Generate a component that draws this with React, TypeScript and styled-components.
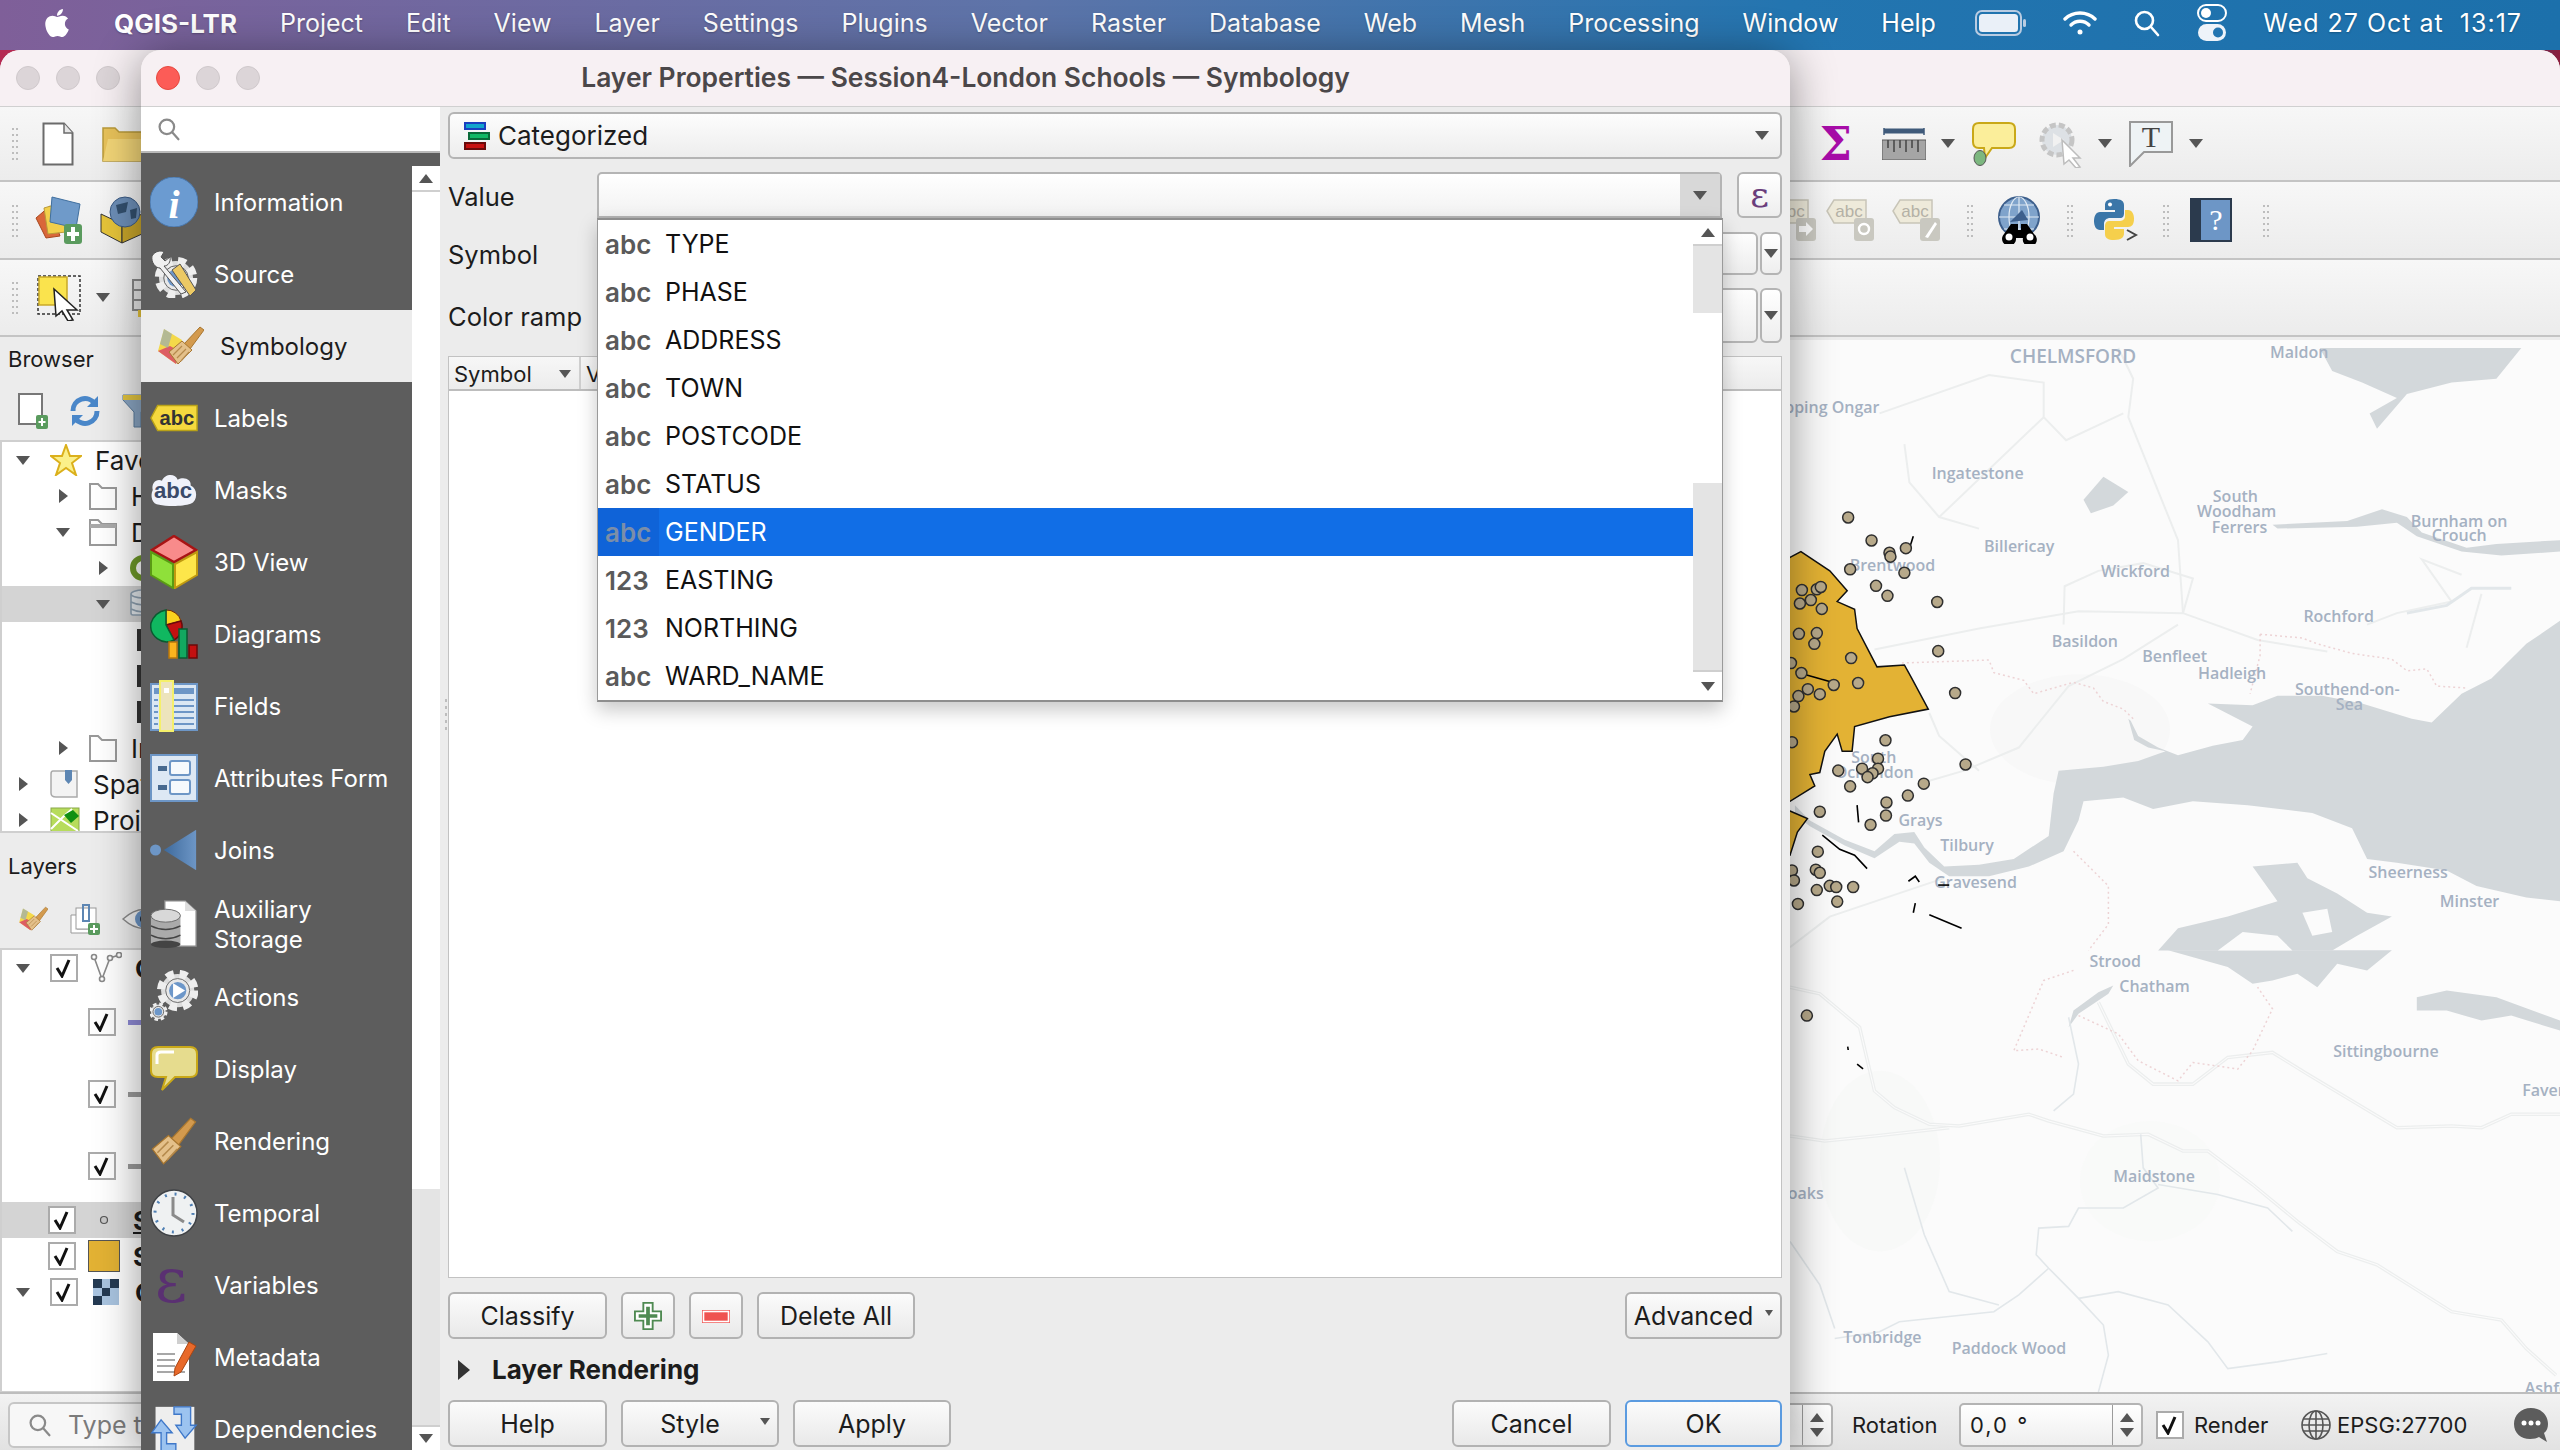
import React from "react";
import styled, { createGlobalStyle } from "styled-components";
import { FaApple } from "react-icons/fa";

const GlobalStyle = createGlobalStyle`
  html, body { margin: 0; padding: 0; background: #1a3c68; }
  * { box-sizing: border-box; }
  body { font-family: Inter, "Liberation Sans", Arial, sans-serif; font-size: 25px; color: #1c1c1c; }
`;

const Screen = styled.div`
  position: relative;
  width: 2560px;
  height: 1450px;
  overflow: hidden;
  background: linear-gradient(90deg, #b52a52 0%, #a82a58 20%, #1c4a7c 21%, #1c4a7c 97%, #8c1c3c 100%);
`;

/* ---------- menu bar ---------- */
const MenuBar = styled.div`
  height: 50px;
  display: flex;
  align-items: center;
  padding: 0 38px 4px 41px;
  color: #fff;
  font-size: 25px;
  white-space: nowrap;
  background: linear-gradient(90deg, #7f5f99 0%, #5d74a9 40%, #2375b0 70%, #1c70ab 100%);
  text-shadow: 0 1px 2px rgba(0, 0, 0, 0.25);
`;
const AppName = styled.span`
  font-weight: 700;
  font-size: 26px;
  margin-left: 41px;
  margin-right: 43px;
`;
const MenuItems = styled.div`
  display: flex;
  gap: 43px;
`;
const StatusIcons = styled.div`
  margin-left: auto;
  display: flex;
  align-items: center;
  gap: 36px;
`;
const Clock = styled.span`
  white-space: pre;
  font-size: 25px;
  letter-spacing: 1px;
`;

/* ---------- main QGIS window ---------- */
const MainWindow = styled.div`
  height: 1400px;
  display: flex;
  flex-direction: column;
  background: #ececec;
  border-radius: 20px 20px 0 0;
  overflow: hidden;
`;
const TitleBar = styled.div<{ $pad: number }>`
  height: 57px;
  flex: none;
  display: flex;
  align-items: center;
  position: relative;
  padding-left: ${(p) => p.$pad}px;
  gap: 16px;
  background: #f7f0f3;
  border-bottom: 1px solid #d0d0d0;
`;
const TrafficLight = styled.span<{ $red?: boolean }>`
  width: 24px;
  height: 24px;
  border-radius: 50%;
  background: ${(p) => (p.$red ? "#fc5c57" : "#dcd5d8")};
  border: 1px solid ${(p) => (p.$red ? "#e5483f" : "#cfc8cb")};
`;
const WindowTitle = styled.div`
  position: absolute;
  left: 0;
  right: 0;
  padding-bottom: 2px;
  text-align: center;
  font-size: 26.4px;
  font-weight: 600;
  color: #4b4749;
`;
const Toolbar = styled.div<{ $h: number }>`
  height: ${(p) => p.$h}px;
  flex: none;
  display: flex;
  align-items: center;
  padding-left: 11px;
  background: linear-gradient(180deg, #f7f7f7, #ececec);
  border-bottom: 2px solid #c4c4c4;
`;
const Grip = styled.span`
  width: 8px;
  height: 35px;
  flex: none;
  background-image: radial-gradient(circle, #bdbdbd 1.2px, transparent 1.4px);
  background-size: 4px 6px;
`;
const ToolSlot = styled.span<{ $gap?: number }>`
  display: flex;
  align-items: center;
  flex: none;
  margin-left: ${(p) => p.$gap ?? 0}px;
`;
const ToolGroupRight = styled.div<{ $end: number }>`
  margin-left: auto;
  display: flex;
  align-items: center;
  padding-right: ${(p) => p.$end}px;
`;
const Caret = styled.span<{ $dir?: "down" | "up" | "right"; $s?: number; $c?: string }>`
  display: inline-block;
  flex: none;
  width: 0;
  height: 0;
  ${(p) => {
    const s = p.$s ?? 7;
    const c = p.$c ?? "#555";
    if (p.$dir === "up")
      return `border-left:${s}px solid transparent;border-right:${s}px solid transparent;border-bottom:${s + 2}px solid ${c};`;
    if (p.$dir === "right")
      return `border-top:${s}px solid transparent;border-bottom:${s}px solid transparent;border-left:${s + 2}px solid ${c};`;
    return `border-left:${s}px solid transparent;border-right:${s}px solid transparent;border-top:${s + 2}px solid ${c};`;
  }}
`;
const Workspace = styled.div`
  flex: 1;
  min-height: 0;
  display: flex;
`;
const LeftPanel = styled.div`
  width: 440px;
  flex: none;
  display: flex;
  flex-direction: column;
  background: #ececec;
`;
const PanelTitle = styled.div<{ $h: number; $top?: number }>`
  height: ${(p) => p.$h}px;
  padding: ${(p) => p.$top ?? 0}px 0 4px 8px;
  display: flex;
  align-items: center;
  font-size: 22px;
  flex: none;
`;
const PanelIcons = styled.div<{ $h: number }>`
  height: ${(p) => p.$h}px;
  flex: none;
  display: flex;
  align-items: center;
  padding: 0 0 4px 18px;
  gap: 22px;
`;
const Tree = styled.div<{ $h: number }>`
  height: ${(p) => p.$h}px;
  flex: none;
  overflow: hidden;
  background: #fff;
  border: 2px solid #cfcfcf;
  border-width: 2px 0 2px 2px;
`;
const TreeRow = styled.div<{ $h?: number; $indent?: number; $selected?: boolean }>`
  height: ${(p) => p.$h ?? 36}px;
  display: flex;
  align-items: center;
  padding-left: ${(p) => p.$indent ?? 0}px;
  font-size: 26px;
  white-space: nowrap;
  background: ${(p) => (p.$selected ? "#d4d4d4" : "transparent")};
`;
const TreeArrow = styled.span`
  width: 34px;
  flex: none;
  display: flex;
  justify-content: center;
`;
const TreeLabel = styled.span<{ $bold?: boolean; $under?: boolean }>`
  margin-left: 13px;
  font-weight: ${(p) => (p.$bold ? 700 : 400)};
  text-decoration: ${(p) => (p.$under ? "underline" : "none")};
`;
const TreeStub = styled.span`
  width: 5px;
  height: 22px;
  background: #333;
`;
const LegendDash = styled.span<{ $c: string }>`
  width: 30px;
  height: 5px;
  margin-left: 12px;
  flex: none;
  background: ${(p) => p.$c};
`;
const CheckBox = styled.span<{ $s?: number }>`
  width: ${(p) => p.$s ?? 28}px;
  height: ${(p) => p.$s ?? 28}px;
  flex: none;
  display: flex;
  align-items: center;
  justify-content: center;
  background: #fff;
  border: 2px solid #ababab;
`;
const LayerSymbol = styled.span`
  width: 32px;
  height: 32px;
  margin-left: 12px;
  flex: none;
  display: flex;
  align-items: center;
  justify-content: center;
`;
const MapPane = styled.div`
  flex: 1;
  min-width: 0;
  margin-top: 3px;
  background: #fbfbfb;
`;
const MapSvg = styled.svg`
  display: block;
  width: 100%;
  height: 100%;
`;
const MapLabel = styled.text<{ $big?: boolean }>`
  font-family: "Open Sans", sans-serif;
  font-size: ${(p) => (p.$big ? 19 : 16)}px;
  font-weight: 600;
  fill: #a5b1c2;
`;
const StatusBar = styled.div`
  height: 58px;
  flex: none;
  display: flex;
  align-items: center;
  padding: 6px 11px 0 8px;
  background: linear-gradient(180deg, #f2f2f2, #e2e2e2);
  border-top: 2px solid #bdbdbd;
`;
const LocatorBox = styled.div`
  width: 360px;
  height: 46px;
  flex: none;
  display: flex;
  align-items: center;
  gap: 16px;
  padding-left: 18px;
  color: #7b7b7b;
  background: #f7f7f7;
  border: 2px solid #c6c6c6;
  border-radius: 6px;
`;
const StatusRight = styled.div`
  margin-left: auto;
  display: flex;
  align-items: center;
  font-size: 22px;
`;
const StatusCell = styled.span<{ $w?: number; $gap?: number }>`
  display: flex;
  align-items: center;
  flex: none;
  width: ${(p) => (p.$w ? `${p.$w}px` : "auto")};
  margin-left: ${(p) => p.$gap ?? 0}px;
`;
const SpinBox = styled.div<{ $w: number }>`
  width: ${(p) => p.$w}px;
  height: 44px;
  display: flex;
  align-items: center;
  flex: none;
  background: linear-gradient(180deg, #fff, #eee);
  border: 2px solid #b4b4b4;
  border-radius: 5px;
`;
const SpinValue = styled.span`
  flex: 1;
  padding-left: 9px;
  white-space: nowrap;
  letter-spacing: 2px;
`;
const SpinArrows = styled.span`
  width: 29px;
  height: 100%;
  margin-left: auto;
  flex: none;
  display: flex;
  flex-direction: column;
  align-items: center;
  justify-content: center;
  gap: 6px;
  border-left: 1px solid #9c9c9c;
`;

/* ---------- layer properties dialog ---------- */
const Dialog = styled.div`
  position: absolute;
  left: 141px;
  top: 50px;
  width: 1649px;
  height: 1400px;
  display: flex;
  flex-direction: column;
  overflow: hidden;
  background: #ececec;
  border-radius: 20px 20px 0 0;
  box-shadow: 0 6px 46px rgba(0, 0, 0, 0.42);
`;
const DialogBody = styled.div`
  flex: 1;
  min-height: 0;
  display: flex;
`;
const NavColumn = styled.div`
  width: 299px;
  flex: none;
  display: flex;
  flex-direction: column;
`;
const NavSearch = styled.div`
  height: 46px;
  flex: none;
  display: flex;
  align-items: center;
  padding-left: 16px;
  background: #fff;
  border-bottom: 2px solid #b9b9b9;
`;
const NavBody = styled.div`
  flex: 1;
  min-height: 0;
  display: flex;
  padding-top: 13px;
  background: #5d5d5d;
`;
const NavList = styled.div`
  width: 271px;
  flex: none;
  overflow: hidden;
`;
const NavRow = styled.div<{ $selected?: boolean; $h?: number }>`
  height: ${(p) => p.$h ?? 72}px;
  display: flex;
  align-items: center;
  gap: 16px;
  padding-left: ${(p) => (p.$selected ? 15 : 9)}px;
  font-size: 24px;
  line-height: 30px;
  color: ${(p) => (p.$selected ? "#1d1d1d" : "#fff")};
  background: ${(p) => (p.$selected ? "#ececec" : "transparent")};
`;
const NavIconSlot = styled.span`
  width: 48px;
  flex: none;
  display: flex;
  justify-content: center;
`;
const NavText = styled.span`
  padding-top: 2px;
`;
const NavScroll = styled.div`
  width: 28px;
  flex: none;
  display: flex;
  flex-direction: column;
  background: #e4e4e4;
`;
const ScrollEnd = styled.div<{ $h: number; $top?: boolean }>`
  height: ${(p) => p.$h}px;
  flex: none;
  display: flex;
  align-items: center;
  justify-content: center;
  background: #fff;
  border: 0 solid #cfcfcf;
  border-bottom-width: ${(p) => (p.$top ? 2 : 0)}px;
  border-top-width: ${(p) => (p.$top ? 0 : 2)}px;
`;
const ScrollThumb = styled.div<{ $h: number; $c: string }>`
  height: ${(p) => p.$h}px;
  flex: none;
  background: ${(p) => p.$c};
`;
const SplitHandle = styled.div`
  width: 8px;
  flex: none;
  display: flex;
  align-items: center;
  justify-content: flex-end;
  padding-bottom: 130px;
`;
const HandleDots = styled.span`
  width: 4px;
  height: 34px;
  background-image: radial-gradient(circle, #bdbdbd 1.2px, transparent 1.4px);
  background-size: 4px 7px;
`;
const RightPane = styled.div`
  flex: 1;
  min-width: 0;
  padding: 5px 8px 0 0;
  display: flex;
  flex-direction: column;
  font-size: 25.5px;
`;
const ComboBox = styled.div<{ $h: number; $fill?: boolean }>`
  height: ${(p) => p.$h}px;
  flex: ${(p) => (p.$fill ? 1 : "none")};
  display: flex;
  align-items: center;
  gap: 8px;
  padding-left: 14px;
  font-size: 26px;
  background: linear-gradient(180deg, #fdfdfd, #ededed);
  border: 2px solid #b4b4b4;
  border-radius: 6px;
  min-width: 0;
`;
const ComboArrow = styled.span`
  margin-left: auto;
  margin-right: 11px;
  display: flex;
`;
const FormRow = styled.div<{ $h: number; $gap: number }>`
  position: relative;
  height: ${(p) => p.$h}px;
  margin-top: ${(p) => p.$gap}px;
  flex: none;
  display: flex;
  align-items: center;
`;
const FormLabel = styled.span`
  width: 149px;
  padding-top: 2px;
  flex: none;
  white-space: nowrap;
`;
const ValueInput = styled.div`
  width: 1125px;
  height: 46px;
  flex: none;
  display: flex;
  background: linear-gradient(180deg, #fff, #f2f2f2);
  border: 2px solid #b4b4b4;
  border-radius: 5px 5px 0 0;
`;
const ValueField = styled.span`
  flex: 1;
`;
const ValueArrow = styled.span`
  width: 40px;
  display: flex;
  align-items: center;
  justify-content: center;
  background: #d8d8d8;
`;
const ExprButton = styled.div`
  width: 45px;
  height: 46px;
  margin-left: 15px;
  flex: none;
  display: flex;
  align-items: center;
  justify-content: center;
  font-family: "DejaVu Serif", serif;
  font-size: 36px;
  line-height: 36px;
  color: #6a3d7c;
  background: linear-gradient(180deg, #fff, #eee);
  border: 2px solid #b4b4b4;
  border-radius: 6px;
`;
const SmallDrop = styled.div`
  width: 22px;
  height: 100%;
  margin-left: 2px;
  flex: none;
  display: flex;
  align-items: center;
  justify-content: center;
  background: linear-gradient(180deg, #fff, #eee);
  border: 2px solid #b4b4b4;
  border-radius: 6px;
`;
const DropList = styled.div`
  position: absolute;
  z-index: 5;
  left: 149px;
  top: 46px;
  width: 1126px;
  height: 484px;
  display: flex;
  font-size: 25px;
  background: #fff;
  border: 1px solid #9a9a9a;
  border-top: 2px solid #8e8e8e;
  border-bottom: 2px solid #8e8e8e;
  box-shadow: 0 8px 18px rgba(0, 0, 0, 0.22);
`;
const DropRows = styled.div`
  flex: 1;
  min-width: 0;
`;
const DropRow = styled.div<{ $selected?: boolean }>`
  height: 48px;
  display: flex;
  align-items: center;
  color: ${(p) => (p.$selected ? "#fff" : "#111")};
  background: ${(p) => (p.$selected ? "#116ee6" : "transparent")};
`;
const TypeCell = styled.span<{ $selected?: boolean }>`
  width: 61px;
  height: 100%;
  flex: none;
  display: flex;
  align-items: center;
  padding-left: 7px;
  font-weight: 600;
  font-size: 26px;
  color: ${(p) => (p.$selected ? "#7b8ea8" : "#5a5a5a")};
  background: ${(p) => (p.$selected ? "#0f63d8" : "transparent")};
`;
const FieldName = styled.span`
  padding-left: 6px;
`;
const DropScroll = styled.div`
  width: 29px;
  flex: none;
  display: flex;
  flex-direction: column;
  background: #e4e4e4;
`;
const SymbolTable = styled.div`
  height: 922px;
  margin-top: 13px;
  flex: none;
  display: flex;
  flex-direction: column;
  background: #fff;
  border: 1px solid #c2c2c2;
`;
const TableHeader = styled.div`
  height: 34px;
  flex: none;
  display: flex;
  font-size: 22px;
  background: linear-gradient(180deg, #f7f7f7, #ececec);
  border-bottom: 2px solid #bdbdbd;
`;
const HeaderCell = styled.div<{ $w: number }>`
  width: ${(p) => p.$w}px;
  flex: none;
  display: flex;
  align-items: center;
  justify-content: space-between;
  padding: 2px 8px 0 5px;
  border-right: 2px solid #cfcfcf;
`;
const ButtonRow = styled.div<{ $gap?: number }>`
  height: 47px;
  margin-top: ${(p) => p.$gap ?? 14}px;
  flex: none;
  display: flex;
  gap: 14px;
`;
const PushButton = styled.div<{ $w: number; $primary?: boolean; $menu?: boolean }>`
  position: relative;
  width: ${(p) => p.$w}px;
  height: 47px;
  flex: none;
  display: flex;
  align-items: center;
  justify-content: center;
  padding-top: 1px;
  padding-right: ${(p) => (p.$menu ? 20 : 0)}px;
  font-size: 25px;
  white-space: nowrap;
  background: linear-gradient(180deg, #fbfbfb, #e9e9e9);
  border: 2px solid ${(p) => (p.$primary ? "#5b9be0" : "#b2b2b2")};
  border-radius: 6px;
`;
const ButtonCaret = styled.span`
  position: absolute;
  right: 7px;
  top: 16px;
  display: flex;
`;
const ButtonSpacer = styled.span`
  flex: 1;
`;
const CollapsedSection = styled.div`
  height: 61px;
  padding: 0 0 0 10px;
  flex: none;
  display: flex;
  align-items: center;
  gap: 22px;
  font-weight: 700;
  font-size: 26px;
`;

/* ---------- drawn icons ---------- */
const WifiIcon = () => (
  <svg width="34" height="28" viewBox="0 0 34 28" fill="none" stroke="#fff" strokeWidth="3.4" strokeLinecap="round">
    <path d="M2 10C10 2 24 2 32 10" />
    <path d="M8 16C13 11 21 11 26 16" />
    <circle cx="17" cy="23" r="2.5" fill="#fff" stroke="none" />
  </svg>
);
const BatteryIcon = () => (
  <svg width="52" height="26" viewBox="0 0 52 26">
    <rect x="1" y="1" width="45" height="24" rx="6" fill="none" stroke="#b9cce2" strokeWidth="2" />
    <rect x="4" y="4" width="39" height="18" rx="3.5" fill="#eaf0f8" />
    <rect x="48" y="9" width="3" height="8" rx="1.5" fill="#b9cce2" />
  </svg>
);
const SearchIcon = ({ c = "#fff", s = 28 }: { c?: string; s?: number }) => (
  <svg width={s} height={s} viewBox="0 0 28 28" fill="none" stroke={c} strokeWidth="2.6" strokeLinecap="round">
    <circle cx="11.5" cy="11.5" r="8.5" />
    <path d="M18 18L25 26" />
  </svg>
);
const ControlIcon = () => (
  <svg width="30" height="38" viewBox="0 0 30 38">
    <rect x="1" y="1" width="28" height="16" rx="8" fill="none" stroke="#fff" strokeWidth="2" />
    <circle cx="9" cy="9" r="5" fill="#fff" />
    <rect x="1" y="20" width="28" height="17" rx="8.5" fill="#eef3f9" />
    <circle cx="21" cy="28.5" r="5" fill="#2375b0" />
  </svg>
);
const Check = ({ s = 20 }: { s?: number }) => (
  <svg width={s} height={s} viewBox="0 0 20 20" fill="none" stroke="#111" strokeWidth="3">
    <path d="M3 10L8 18L15 2" />
  </svg>
);
const FolderOutline = ({ open }: { open?: boolean }) => (
  <svg width="30" height="28" viewBox="0 0 30 28" fill="none" stroke="#999" strokeWidth="2">
    <path d="M2 27V2H10L14 6H28V27Z" fill="#fff" />
    {open && <path d="M2 8H28" strokeWidth="4" stroke="#aaa" />}
  </svg>
);
const GreenRing = () => (
  <svg width="30" height="28" viewBox="0 0 30 28" fill="none" stroke="#6f9a2a" strokeWidth="6">
    <circle cx="15" cy="14" r="10" />
  </svg>
);
const DbSmall = () => (
  <svg width="30" height="30" viewBox="0 0 30 30" fill="#e3e8ec" stroke="#8ea0b0" strokeWidth="1.6">
    <rect x="3" y="5" width="24" height="21" rx="2" />
    <ellipse cx="15" cy="5" rx="12" ry="4" />
    <path d="M3 13Q15 19 27 13M3 20Q15 26 27 20" fill="none" />
  </svg>
);
const SpatialIcon = () => (
  <svg width="30" height="30" viewBox="0 0 30 30">
    <path d="M3 2H27V28H6Q1 28 1 24V5Q1 2 3 2Z" fill="#f3f3f3" stroke="#aaa" strokeWidth="1.5" />
    <path d="M15 1H22V11L18.5 15L15 11Z" fill="#5d86b3" />
  </svg>
);
const ProjectIcon = () => (
  <svg width="30" height="30" viewBox="0 0 30 30">
    <rect x="1" y="3" width="28" height="26" fill="#b7dc5c" stroke="#8aa84a" />
    <path d="M1 8L28 26M1 24L13 12L22 4" stroke="#fff" strokeWidth="2" fill="none" />
    <path d="M14 10L23 5L29 11L21 18Z" fill="#0f8f12" />
  </svg>
);
const VectorIcon = () => (
  <svg width="32" height="32" viewBox="0 0 32 32" fill="none" stroke="#8a8a8a" strokeWidth="1.6">
    <path d="M4 5L12 27L20 6L29 3" />
    <circle cx="4" cy="5" r="2.5" fill="#fff" />
    <circle cx="12" cy="27" r="2.5" fill="#fff" />
    <circle cx="20" cy="6" r="2.5" fill="#fff" />
    <circle cx="29" cy="3" r="2.5" fill="#fff" />
  </svg>
);
const SchoolDot = () => (
  <svg width="10" height="10" viewBox="0 0 10 10">
    <circle cx="5" cy="5" r="3.5" fill="#c8c8c8" stroke="#555" strokeWidth="1.2" />
  </svg>
);
const SwatchSquare = () => (
  <svg width="32" height="32" viewBox="0 0 32 32">
    <rect x="0.5" y="0.5" width="31" height="31" fill="#e3b234" stroke="#555" />
  </svg>
);
const CheckerIcon = () => (
  <svg width="26" height="26" viewBox="0 0 3 3" shapeRendering="crispEdges">
    <rect width="3" height="3" fill="#a9c4e0" />
    <path d="M0 0H1V1H0ZM2 0H3V1H2ZM1 1H2V2H1ZM0 2H1V3H0Z" fill="#243a52" />
  </svg>
);
const ClipIcon = () => (
  <svg width="30" height="32" viewBox="0 0 30 32">
    <path d="M1 12H7V26H20V30H1Z" fill="#fff" stroke="#999" />
    <rect x="6" y="5" width="20" height="21" fill="#fff" stroke="#999" />
    <path d="M13 2H19V18H13Z" fill="none" stroke="#5d86b3" strokeWidth="2" />
    <rect x="18" y="20" width="12" height="12" rx="2" fill="#5a9b5e" />
    <path d="M24 22V30M20 26H28" stroke="#fff" strokeWidth="2" />
  </svg>
);
const EyeIcon = () => (
  <svg width="44" height="26" viewBox="0 0 44 26">
    <path d="M1 13Q22 -6 43 13Q22 32 1 13Z" fill="#f2f2f2" stroke="#8a8a8a" strokeWidth="1.5" />
    <circle cx="22" cy="13" r="9" fill="#6d96c6" />
    <circle cx="22" cy="13" r="4" fill="#1e2a3a" />
  </svg>
);
const NewDoc = () => (
  <svg width="32" height="44" viewBox="0 0 32 44">
    <path d="M1.5 1.5H22L30.5 11V42.5H1.5Z" fill="#fff" stroke="#6b6b6b" strokeWidth="2" />
    <path d="M22 1.5V11H30.5" fill="#e6e6e6" stroke="#6b6b6b" strokeWidth="1.5" />
  </svg>
);
const FolderYellow = () => (
  <svg width="42" height="36" viewBox="0 0 42 36">
    <path d="M1 35V2H13L17 6H42V35Z" fill="#e8c25a" stroke="#b99a3a" strokeWidth="1.5" />
    <path d="M1 35L6 13H42V35Z" fill="#f2d577" />
  </svg>
);
const AddLayers = () => (
  <svg width="48" height="48" viewBox="0 0 48 48">
    <path d="M2 22L16 10L26 40L12 42Z" fill="#d9673a" stroke="#a8481f" />
    <path d="M10 12L30 6L32 36L14 38Z" fill="#f2cf4a" stroke="#b99a3a" />
    <path d="M18 1L46 8L42 32L16 26Z" fill="#6f9ac9" stroke="#3f6f9f" />
    <rect x="30" y="28" width="18" height="20" rx="3" fill="#5a9b5e" />
    <path d="M39 31V45M33 38H45" stroke="#fff" strokeWidth="4" />
  </svg>
);
const DbGlobe = () => (
  <svg width="42" height="48" viewBox="0 0 42 48">
    <path d="M1 18L22 28V47L1 36Z" fill="#e6c43a" stroke="#333" />
    <path d="M22 28L42 18V38L22 47Z" fill="#c9a62a" stroke="#333" />
    <circle cx="25" cy="16" r="15" fill="#6d8fb8" stroke="#3b5b85" />
    <path d="M16 9L28 6L26 16L18 18ZM30 14L37 12L36 22L31 23Z" fill="#33506f" />
  </svg>
);
const SelectTool = () => (
  <svg width="46" height="46" viewBox="0 0 46 46">
    <rect x="1" y="1" width="42" height="38" fill="none" stroke="#333" strokeWidth="1.5" strokeDasharray="3 2" />
    <rect x="2" y="2" width="28" height="28" fill="#fae34d" stroke="#c9a928" strokeWidth="1.5" />
    <path d="M17 14L40 35L30 35L36 45L31 46L25 36L19 41Z" fill="#fff" stroke="#222" strokeWidth="1.5" />
  </svg>
);
const AttributeTool = () => (
  <svg width="30" height="38" viewBox="0 0 30 38">
    <rect x="1" y="1" width="28" height="30" fill="#e8e8e8" stroke="#8a8a8a" strokeWidth="2" />
    <path d="M1 11H29M1 21H29M11 1V31" stroke="#8a8a8a" strokeWidth="2" />
    <rect x="6" y="31" width="10" height="7" fill="#e6c43a" />
  </svg>
);
const MeasureIcon = () => (
  <svg width="44" height="32" viewBox="0 0 44 32">
    <path d="M2 3H42" stroke="#3f5a7a" strokeWidth="5" />
    <path d="M2 0V7M42 0V7" stroke="#3f5a7a" strokeWidth="1.5" />
    <rect x="0" y="12" width="44" height="20" fill="#a5a5a5" stroke="#5a5a5a" />
    <path d="M6 12V20M12 12V24M18 12V20M24 12V24M30 12V20M36 12V24" stroke="#444" strokeWidth="1.5" />
  </svg>
);
const Sigma = styled.span`
  font-family: "DejaVu Serif", serif;
  font-weight: 700;
  font-size: 46px;
  line-height: 46px;
  color: #a70ca8;
`;
const TipIcon = () => (
  <svg width="44" height="44" viewBox="0 0 44 44">
    <path d="M7 1H37Q43 1 43 7V20Q43 26 37 26H20L13 36L12 26H7Q1 26 1 20V7Q1 1 7 1Z" fill="#fbee9a" stroke="#c9a818" strokeWidth="2" />
    <ellipse cx="8" cy="36" rx="6" ry="7.5" fill="#7cb77f" stroke="#555" />
  </svg>
);
const ActionCursor = () => (
  <svg width="50" height="48" viewBox="0 0 50 48">
    <circle cx="21" cy="20" r="15" fill="#dde1e5" stroke="#c5c5c5" strokeWidth="5" strokeDasharray="6 3" />
    <path d="M17 13L28 20L17 27Z" fill="#f1f1f1" />
    <path d="M26 20L44 38L37 38L44 47L40 48L33 40L28 44Z" fill="#fff" stroke="#bdbdbd" strokeWidth="1.5" />
  </svg>
);
const TextBubble = () => (
  <svg width="44" height="46" viewBox="0 0 44 46">
    <path d="M1 1H43V31H15L1 45Z" fill="#eef3f5" stroke="#999" strokeWidth="2" />
    <text x="22" y="26" textAnchor="middle" fontFamily="Liberation Serif" fontSize="30" fill="#444">T</text>
  </svg>
);
const LabelTool = ({ glyph }: { glyph: "arrow" | "rotate" | "pen" }) => (
  <svg width="48" height="42" viewBox="0 0 48 42">
    <path d="M8 1H40V24H8L1 12Z" fill="#eeeada" stroke="#c8c5b8" strokeWidth="1.5" />
    <text x="23" y="18" textAnchor="middle" fontFamily="Liberation Sans" fontSize="17" fill="#b4b1a6">abc</text>
    <rect x="28" y="19" width="20" height="23" rx="3" fill="#c9c8c0" />
    {glyph === "rotate" && <circle cx="38" cy="30" r="5" fill="none" stroke="#fff" strokeWidth="2.4" />}
    {glyph === "arrow" && <path d="M31 27H38V23L45 30L38 37V33H31Z" fill="#fff" />}
    {glyph === "pen" && <path d="M33 38L43 23L45 25L36 39Z" fill="#fff" />}
  </svg>
);
const GlobeBinoculars = () => (
  <svg width="42" height="48" viewBox="0 0 42 48">
    <circle cx="21" cy="21" r="20" fill="#7fa3cb" stroke="#3d5f8c" strokeWidth="2" />
    <path d="M1 21H41M21 1V41M6 9H36M6 33H36" stroke="#dfe9f3" strokeWidth="1.2" />
    <ellipse cx="21" cy="21" rx="10" ry="20" fill="none" stroke="#dfe9f3" strokeWidth="1.2" />
    <path d="M12 26L24 14L30 24Z" fill="#3d5f8c" />
    <path d="M13 28H20V34H23V28H29L36 38A7 7 0 1 1 25 42H18A7 7 0 1 1 6 38Z" fill="#000" />
    <circle cx="11" cy="41" r="3.5" fill="#fff" />
    <circle cx="32" cy="41" r="3.5" fill="#fff" />
  </svg>
);
const PythonIcon = () => (
  <svg width="44" height="44" viewBox="0 0 44 44">
    <path d="M20 1C12 1 11 4 11 8V12H21V14H6C2 14 0 18 0 23S2 32 6 32H10V26C10 22 13 20 16 20H26C29 20 30 18 30 15V7C30 3 27 1 20 1Z" fill="#3b76a8" />
    <circle cx="16" cy="6.5" r="2" fill="#fff" />
    <path d="M20 42C28 42 30 39 30 35V31H20V29H34C38 29 40 26 40 21S38 12 34 12H31V18C31 22 28 23 25 23H15C12 23 11 26 11 28V36C11 40 14 42 20 42Z" fill="#f5cf4c" />
    <path d="M33 32L42 37L33 42" fill="none" stroke="#444" strokeWidth="2" />
  </svg>
);
const HelpBook = () => (
  <svg width="42" height="44" viewBox="0 0 42 44">
    <rect x="1" y="1" width="40" height="42" fill="#6d96c6" stroke="#2b3a4d" strokeWidth="2" />
    <rect x="1" y="1" width="10" height="42" fill="#2b3a4d" />
    <text x="26" y="32" textAnchor="middle" fontFamily="Liberation Serif" fontSize="30" fill="#fff">?</text>
  </svg>
);
const SmallNew = () => (
  <svg width="30" height="36" viewBox="0 0 30 36">
    <rect x="1" y="1" width="23" height="30" fill="#fff" stroke="#777" strokeWidth="2" />
    <rect x="18" y="22" width="12" height="14" rx="2" fill="#5a9b5e" />
    <path d="M24 25V33M20.5 29H27.5" stroke="#fff" strokeWidth="2" />
  </svg>
);
const RefreshIcon = () => (
  <svg width="30" height="34" viewBox="0 0 30 34" fill="none" stroke="#4a87c9" strokeWidth="5">
    <path d="M3 17A12 12 0 0 1 25 10" />
    <path d="M27 17A12 12 0 0 1 5 24" />
    <path d="M28 2V13H17Z" fill="#4a87c9" stroke="none" />
    <path d="M2 32V21H13Z" fill="#4a87c9" stroke="none" />
  </svg>
);
const FilterIcon = () => (
  <svg width="30" height="34" viewBox="0 0 30 34">
    <path d="M1 1H29V6L19 18V33H12V18L1 6Z" fill="#8aa5c2" stroke="#5a7a9a" />
    <rect x="1" y="1" width="28" height="5" fill="#e2c440" />
  </svg>
);
const StarIcon = () => (
  <svg width="32" height="32" viewBox="0 0 32 32">
    <path d="M16 1L20 12H31L22 19L26 31L16 24L6 31L10 19L1 12H12Z" fill="#fbf08a" stroke="#dbb01c" strokeWidth="2" />
  </svg>
);
const BrushHead = () => (
  <>
    <path d="M28 18L44 1L48 4L34 23Z" fill="#d39a4e" stroke="#a8762f" />
    <path d="M13 26L26 15L36 24L22 38Z" fill="#e4c08a" stroke="#a8762f" />
    <path d="M17 29L26 20M21 32L30 23M25 35L33 26" stroke="#b58a4d" strokeWidth="1.2" />
  </>
);
const PaintBrush = ({ w, h }: { w: number; h: number }) => (
  <svg width={w} height={h} viewBox="0 0 48 40">
    <path d="M2 25L8 3L26 14L20 38Z" fill="#f4d94a" />
    <path d="M2 25L14 20L25 26L20 38Z" fill="#dd5d63" />
    <path d="M8 3L16 8L12 22L4 18Z" fill="#7f9fd0" opacity="0.55" />
    <BrushHead />
  </svg>
);
const Gear = ({ cx, cy, r, fill }: { cx: number; cy: number; r: number; fill: string }) => (
  <g>
    <circle cx={cx} cy={cy} r={r} fill="#ddd" stroke="#eee" strokeWidth={r * 0.5} strokeDasharray={`${r * 0.45} ${r * 0.35}`} />
    <circle cx={cx} cy={cy} r={r * 0.72} fill="#e8e8e8" stroke="#666" strokeWidth="1" />
    <circle cx={cx} cy={cy} r={r * 0.52} fill={fill} />
  </g>
);

const navIcons: Record<string, React.ReactNode> = {
  Information: (
    <svg width="48" height="50" viewBox="0 0 48 50">
      <ellipse cx="24" cy="25" rx="24" ry="25" fill="#6b9bd1" stroke="#4a78ad" />
      <text x="24" y="41" textAnchor="middle" fontFamily="Liberation Serif" fontStyle="italic" fontWeight="700" fontSize="40" fill="#fff">i</text>
    </svg>
  ),
  Source: (
    <svg width="48" height="48" viewBox="0 0 48 48">
      <Gear cx={26} cy={28} r={17} fill="#6d97c9" />
      <path d="M2 6C5 1 11 0 14 2L11 7L15 11L20 7C21 12 18 16 14 16L36 42L31 44L10 18C5 18 1 12 2 6Z" fill="#f1f1f1" stroke="#555" />
      <path d="M22 20L30 14L46 40L40 46Z" fill="#ecc964" stroke="#555" />
    </svg>
  ),
  Symbology: <PaintBrush w={52} h={40} />,
  Labels: (
    <svg width="50" height="28" viewBox="0 0 50 28">
      <path d="M8 1H49V27H8L1 14Z" fill="#f5d93e" stroke="#b9a218" strokeWidth="1.5" />
      <text x="28" y="21" textAnchor="middle" fontFamily="Liberation Sans" fontWeight="700" fontSize="21" fill="#333">abc</text>
    </svg>
  ),
  Masks: (
    <svg width="52" height="36" viewBox="0 0 52 36">
      <path d="M10 34C2 34 0 24 3 18C1 10 8 5 13 8C16 0 28 0 30 7C37 3 45 7 44 13C52 16 52 30 44 33C36 36 18 36 10 34Z" fill="#f0f2fa" />
      <text x="25" y="27" textAnchor="middle" fontFamily="Liberation Sans" fontWeight="700" fontSize="24" fill="#3a4a6a">abc</text>
    </svg>
  ),
  "3D View": (
    <svg width="48" height="54" viewBox="0 0 48 54">
      <path d="M24 1L46 15L24 27L2 15Z" fill="#f88b8b" stroke="#a81414" strokeWidth="2.5" />
      <path d="M1 17L23 29V53L1 40Z" fill="#8fe03a" stroke="#5a9b14" strokeWidth="2" />
      <path d="M47 17L25 29V53L47 40Z" fill="#fde64a" stroke="#c09a10" strokeWidth="2" />
    </svg>
  ),
  Diagrams: (
    <svg width="48" height="50" viewBox="0 0 48 50">
      <path d="M16 16L16 1A15 15 0 0 1 31 12Z" fill="#fbd21e" stroke="#7a2a00" />
      <path d="M16 16L31 12A15 15 0 0 1 24 31Z" fill="#c21010" stroke="#6a0a0a" strokeWidth="1.5" />
      <path d="M16 16L24 31A16 16 0 0 1 1 14Q5 3 16 1Z" fill="#10b860" stroke="#0a5a30" strokeWidth="1.5" />
      <rect x="19" y="33" width="8" height="16" fill="#fbb41e" stroke="#b9770c" strokeWidth="1.5" />
      <rect x="29" y="20" width="8" height="29" fill="#12a860" stroke="#0a5a30" strokeWidth="1.5" />
      <rect x="39" y="36" width="8" height="13" fill="#c21010" stroke="#6a0a0a" strokeWidth="1.5" />
    </svg>
  ),
  Fields: (
    <svg width="48" height="52" viewBox="0 0 48 52">
      <rect x="1" y="4" width="46" height="46" fill="#dbe7f3" stroke="#6d96c6" strokeWidth="2" />
      <rect x="4" y="8" width="40" height="6" fill="#6d96c6" />
      <path d="M22 20H44M22 26H44M22 32H44M22 38H44M22 44H44" stroke="#6d96c6" strokeWidth="2" />
      <path d="M4 20H8M4 26H8M4 32H8M4 38H8M4 44H8" stroke="#6d96c6" strokeWidth="2" />
      <rect x="10" y="1" width="13" height="50" fill="#ede4bc" stroke="#f5f06a" strokeWidth="2" />
      <rect x="14" y="8" width="5" height="5" fill="#fff" />
    </svg>
  ),
  "Attributes Form": (
    <svg width="48" height="48" viewBox="0 0 48 48">
      <rect x="1" y="1" width="46" height="46" fill="#dde8f4" stroke="#6d96c6" strokeWidth="2" />
      <rect x="8" y="12" width="9" height="5" fill="#47698f" />
      <rect x="8" y="31" width="9" height="5" fill="#47698f" />
      <rect x="20" y="7" width="20" height="14" rx="2" fill="#f6f9fc" stroke="#6d96c6" strokeWidth="2" />
      <rect x="20" y="26" width="20" height="14" rx="2" fill="#f6f9fc" stroke="#6d96c6" strokeWidth="2" />
    </svg>
  ),
  Joins: (
    <svg width="52" height="44" viewBox="0 0 52 44">
      <defs>
        <linearGradient id="joinGrad" x1="0" x2="1">
          <stop offset="0" stopColor="#3e6a9c" />
          <stop offset="1" stopColor="#6d96c6" />
        </linearGradient>
      </defs>
      <circle cx="6" cy="22" r="6" fill="#6d96c6" />
      <path d="M15 22L50 0V44Z" fill="url(#joinGrad)" />
    </svg>
  ),
  "Auxiliary Storage": (
    <svg width="52" height="52" viewBox="0 0 52 52">
      <path d="M16 1H38L50 12V50H16Z" fill="#fff" stroke="#888" strokeWidth="1.5" />
      <path d="M38 1V12H50" fill="#ddd" />
      <rect x="1" y="16" width="32" height="33" rx="3" fill="#aaa" />
      <ellipse cx="17" cy="17" rx="16" ry="7" fill="#d8d8d8" stroke="#666" />
      <ellipse cx="17" cy="48" rx="16" ry="4" fill="#444" />
      <path d="M1 28Q17 36 33 28M1 38Q17 46 33 38" fill="none" stroke="#444" strokeWidth="1.5" />
    </svg>
  ),
  Actions: (
    <svg width="52" height="54" viewBox="0 0 52 54">
      <Gear cx={30} cy={20} r={18} fill="#6d97c9" />
      <path d="M25 12L38 20L25 28Z" fill="#fff" />
      <Gear cx={9} cy={43} r={8} fill="#6d97c9" />
    </svg>
  ),
  Display: (
    <svg width="48" height="46" viewBox="0 0 48 46">
      <path d="M8 1H40Q47 1 47 8V25Q47 31 40 31H25L12 44L16 31H8Q1 31 1 25V8Q1 1 8 1Z" fill="#e6dc8e" stroke="#c9a818" strokeWidth="2" />
      <path d="M7 18V9Q7 6 11 6H24" fill="none" stroke="#fff" strokeWidth="3" />
    </svg>
  ),
  Rendering: (
    <svg width="46" height="48" viewBox="12 0 37 39">
      <BrushHead />
    </svg>
  ),
  Temporal: (
    <svg width="48" height="48" viewBox="0 0 48 48">
      <circle cx="24" cy="24" r="23" fill="#eff1f2" stroke="#3f4246" strokeWidth="1.5" />
      <circle cx="24" cy="24" r="19" fill="none" stroke="#4f7fb3" strokeWidth="3" strokeDasharray="2 7.95" />
      <path d="M23 8V26L34 33" fill="none" stroke="#8a8a8a" strokeWidth="3" />
    </svg>
  ),
  Variables: (
    <svg width="48" height="48" viewBox="0 0 48 48">
      <text x="21" y="41" textAnchor="middle" fontFamily="DejaVu Serif" fontSize="62" fill="#5a3072">ε</text>
    </svg>
  ),
  Metadata: (
    <svg width="46" height="50" viewBox="0 0 46 50">
      <path d="M2 1H26L38 12V49H2Z" fill="#fff" />
      <path d="M26 1V12H38Z" fill="#cfcfcf" />
      <path d="M6 22H24M6 28H24M6 34H24M6 40H34" stroke="#8a8a8a" strokeWidth="1.5" />
      <path d="M24 36L38 10L45 14L30 40L23 44Z" fill="#e8692a" stroke="#aa4512" />
    </svg>
  ),
  Dependencies: (
    <svg width="52" height="48" viewBox="0 0 52 48">
      <rect x="6" y="0" width="42" height="48" fill="#eee" />
      <path d="M26 0H44V20H50L38 34L28 20H34V8H26Z" fill="#9cc3f0" stroke="#3f78c9" strokeWidth="1.5" />
      <path d="M28 48H12V28H2L12 14L24 28H18V40H28Z" fill="#9cc3f0" stroke="#3f78c9" strokeWidth="1.5" />
    </svg>
  ),
};

const navItems: { name: string; h?: number; selected?: boolean }[] = [
  { name: "Information" },
  { name: "Source" },
  { name: "Symbology", selected: true },
  { name: "Labels" },
  { name: "Masks" },
  { name: "3D View" },
  { name: "Diagrams" },
  { name: "Fields" },
  { name: "Attributes Form" },
  { name: "Joins" },
  { name: "Auxiliary Storage", h: 75 },
  { name: "Actions" },
  { name: "Display" },
  { name: "Rendering" },
  { name: "Temporal" },
  { name: "Variables" },
  { name: "Metadata" },
  { name: "Dependencies" },
];

const fields: [string, string][] = [
  ["abc", "TYPE"],
  ["abc", "PHASE"],
  ["abc", "ADDRESS"],
  ["abc", "TOWN"],
  ["abc", "POSTCODE"],
  ["abc", "STATUS"],
  ["abc", "GENDER"],
  ["123", "EASTING"],
  ["123", "NORTHING"],
  ["abc", "WARD_NAME"],
];

const menus = ["Project", "Edit", "View", "Layer", "Settings", "Plugins", "Vector", "Raster", "Database", "Web", "Mesh", "Processing", "Window", "Help"];

/* ---------- map ---------- */
type Pt = [number, number];
// the map notes were read off two zoomed crops, these bring them back to page pixels
const upper = ([x, y]: Pt): Pt => [1780 + x / 2.01, 350 + y / 2.613];
const lower = ([x, y]: Pt): Pt => [1780 + x / 2.01, 950 + y / 3];
const toPath = (f: (p: Pt) => Pt, pts: Pt[], close = false) =>
  "M" + pts.map((p) => f(p).map((n) => n.toFixed(1)).join(" ")).join("L") + (close ? "Z" : "");

const WATER = "#d3d8db";
const LAND = "#fbfbfb";
const waterShapes: Pt[][] = [
  [[1568, 710], [1500, 770], [1430, 860], [1370, 900], [1310, 975], [1270, 965], [1170, 925], [1090, 905], [1000, 905], [950, 930], [860, 925], [950, 985], [930, 1020], [870, 1035], [800, 1060], [760, 1040], [720, 1010], [705, 970], [700, 965], [712, 1020], [740, 1040], [775, 1050], [720, 1075], [650, 1090], [560, 1100], [550, 1160], [540, 1270], [470, 1330], [400, 1345], [330, 1350], [290, 1300], [270, 1260], [230, 1265], [190, 1310], [130, 1280], [60, 1230], [30, 1190], [30, 1215], [60, 1245], [130, 1295], [190, 1328], [240, 1285], [270, 1290], [300, 1340], [340, 1375], [420, 1375], [500, 1350], [570, 1310], [600, 1230], [610, 1180], [690, 1170], [750, 1200], [830, 1180], [940, 1190], [1070, 1210], [1150, 1250], [1180, 1330], [1240, 1340], [1340, 1360], [1400, 1400], [1500, 1430], [1568, 1440]],
  [[1085, 0], [1490, 0], [1440, 80], [1350, 90], [1260, 120], [1200, 210], [1185, 170], [1240, 130], [1170, 90], [1110, 60]],
  [[610, 395], [650, 335], [700, 375], [670, 410], [625, 430]],
  [[990, 460], [1140, 450], [1210, 420], [1260, 440], [1290, 480], [1380, 520], [1440, 510], [1568, 500], [1568, 530], [1450, 540], [1370, 530], [1280, 490], [1240, 455], [1160, 465], [1000, 470]],
  [[950, 1350], [1040, 1340], [1060, 1380], [1120, 1420], [1180, 1470], [1230, 1480], [1160, 1530], [1110, 1568], [760, 1568], [800, 1510], [900, 1480], [1000, 1440]],
];
const upperIslands: Pt[][] = [
  [[880, 1568], [930, 1520], [1000, 1530], [1030, 1568]],
  [[1050, 1470], [1100, 1460], [1110, 1520], [1070, 1530]],
];
const lowerWater: Pt[][] = [
  [[780, 0], [1230, 0], [1180, 60], [1120, 40], [1080, 110], [1040, 70], [990, 90], [950, 100], [900, 50]],
  [[1280, 140], [1340, 120], [1440, 140], [1568, 210], [1568, 240], [1470, 195], [1410, 210], [1340, 180], [1280, 180]],
  [[640, 125], [670, 105], [660, 130], [600, 190], [580, 230], [590, 180]],
];
const upperRoads: Pt[][] = [
  [[190, 785], [400, 730], [600, 685], [810, 690], [960, 760], [1100, 790]],
  [[810, 690], [800, 500], [700, 180], [710, 80], [680, 0]],
  [[800, 720], [690, 810], [580, 880], [480, 1040], [370, 1100], [290, 1130]],
  [[200, 170], [420, 70], [530, 90], [530, 180], [575, 240], [690, 170]],
  [[320, 440], [530, 180]],
  [[250, 250], [260, 350], [320, 440], [400, 470]],
  [[570, 720], [572, 620], [640, 580], [730, 560], [830, 600], [810, 690]],
  [[300, 950], [320, 1010], [400, 1100]],
  [[20, 1560], [100, 1480], [330, 1380]],
  [[1370, 590], [1290, 550], [1350, 660], [1240, 690], [1180, 720]],
  [[1410, 640], [1380, 780]],
];
const upperRiver: Pt[] = [[1470, 625], [1390, 625], [1340, 670], [1260, 690]];
const lowerRoads: Pt[][] = [
  [[20, 110], [80, 130], [160, 230], [190, 420], [230, 470], [300, 520], [360, 525], [500, 490], [540, 510], [650, 555], [740, 550], [810, 600], [860, 600], [950, 700], [1040, 810], [1120, 900], [1200, 940], [1350, 1080], [1450, 1105], [1500, 1190], [1560, 1270]],
  [[20, 555], [90, 570], [190, 555], [340, 530]],
  [[640, 155], [700, 340], [750, 400], [830, 400], [900, 320], [990, 305], [1060, 370], [1240, 530], [1350, 525], [1410, 530], [1470, 490], [1568, 490]],
];
const lowerRivers: Pt[][] = [
  [[725, 550], [730, 650], [760, 710], [690, 770], [600, 770], [580, 825], [520, 830], [515, 910], [540, 950], [600, 1040], [650, 1120], [660, 1210], [640, 1320]],
  [[540, 950], [480, 1030], [430, 1080], [240, 1110], [200, 1140], [110, 1160]],
  [[250, 650], [290, 850], [340, 1020], [440, 1060]],
  [[600, 1040], [680, 1020], [780, 1060], [860, 1170], [900, 1250], [1000, 1230], [1100, 1205]],
  [[760, 700], [880, 730], [980, 770], [1030, 840]],
  [[580, 200], [600, 340], [590, 430], [550, 480]],
  [[20, 870], [80, 1000], [110, 1130]],
];
const upperBorders: Pt[][] = [
  [[245, 820], [420, 812], [430, 845], [490, 865], [510, 900], [590, 870], [630, 885], [650, 920], [690, 940], [710, 965]],
  [[965, 745], [1050, 755], [1080, 770], [1150, 795], [1230, 810], [1260, 840], [1300, 835], [1320, 880], [1380, 885]],
  [[965, 745], [965, 800], [945, 900]],
  [[590, 1310], [660, 1400], [660, 1500], [620, 1568]],
];
const lowerBorders: Pt[][] = [
  [[590, 60], [530, 90], [470, 300], [520, 295], [570, 320]],
  [[600, 195], [680, 250], [720, 330], [800, 390], [830, 335], [920, 355], [950, 300], [990, 175], [960, 110]],
];
const boroughs: Pt[][] = [
  [[20, 545], [42, 530], [100, 580], [135, 632], [115, 660], [150, 680], [155, 730], [195, 830], [250, 825], [265, 860], [298, 940], [220, 960], [150, 985], [145, 1050], [125, 1050], [115, 1005], [90, 1050], [80, 1105], [60, 1110], [70, 1140], [20, 1180], [0, 1180], [0, 545]],
  [[20, 1205], [55, 1225], [35, 1260], [20, 1320], [0, 1320], [0, 1205]],
];
const schools: Pt[] = [
  [137, 441], [184, 501], [220, 533], [222, 543], [253, 521], [141, 576], [250, 585], [193, 619], [216, 645], [316, 661],
  [44, 630], [74, 628], [82, 622], [40, 665], [62, 656], [84, 679], [38, 744], [74, 742], [69, 770], [143, 807], [318, 789],
  [22, 820], [43, 846], [108, 877], [157, 872], [56, 888], [37, 906], [80, 901], [28, 933], [352, 898], [212, 1021], [24, 1026],
  [197, 1069], [165, 1095], [197, 1095], [186, 1107], [176, 1117], [117, 1100], [141, 1141], [373, 1084], [289, 1134], [257, 1165],
  [214, 1183], [213, 1217], [182, 1241], [80, 1207], [76, 1311], [72, 1358], [80, 1366], [24, 1360], [28, 1386], [100, 1400],
  [113, 1403], [147, 1403], [74, 1411], [115, 1441], [36, 1447],
];
const fragments: Pt[][] = [
  [[85, 1268], [120, 1305], [150, 1320], [175, 1355]],
  [[258, 1388], [272, 1375], [280, 1390]],
  [[300, 1475], [365, 1510]],
  [[50, 850], [105, 870]],
  [[268, 490], [258, 530]],
  [[155, 1190], [158, 1235]],
  [[318, 1398], [340, 1398]],
  [[272, 1445], [268, 1470]],
];
const upperPlaces: [string, number, number][] = [
  ["Maldon", 985, 25], ["Ingatestone", 305, 340], ["South", 870, 400], ["Woodham", 838, 440], ["Ferrers", 868, 482],
  ["Burnham on", 1268, 465], ["Crouch", 1310, 503], ["Billericay", 410, 530], ["Brentwood", 140, 580], ["Wickford", 645, 597],
  ["Rochford", 1052, 712], ["Basildon", 546, 777], ["Benfleet", 728, 817], ["Hadleigh", 840, 862], ["Southend-on-", 1035, 903],
  ["Sea", 1117, 942], ["South", 143, 1080], ["Ockendon", 110, 1118], ["Grays", 238, 1243], ["Tilbury", 322, 1310],
  ["Gravesend", 310, 1405], ["Sheerness", 1183, 1380], ["Minster", 1326, 1455],
];
const lowerPlaces: [string, number, number][] = [
  ["Strood", 622, 50], ["Chatham", 682, 125], ["Sittingbourne", 1112, 320], ["Faversham", 1492, 435], ["Maidstone", 670, 692],
  ["Tonbridge", 127, 1175], ["Paddock Wood", 345, 1207], ["Ashford", 1497, 1325],
];

const MapView = () => (
  <MapSvg viewBox="440 342 2120 1048" preserveAspectRatio="none">
    <rect x="440" y="342" width="2120" height="1048" fill={LAND} />
    <ellipse cx="2080" cy="730" rx="90" ry="55" fill="#f8f8f8" />
    <ellipse cx="2150" cy="1180" rx="70" ry="60" fill="#f9faf9" />
    <ellipse cx="1880" cy="1160" rx="60" ry="90" fill="#f8f9f8" />
    {waterShapes.map((s, i) => <path key={i} d={toPath(upper, s, true)} fill={WATER} />)}
    {lowerWater.map((s, i) => <path key={i} d={toPath(lower, s, true)} fill={WATER} />)}
    {upperIslands.map((s, i) => <path key={i} d={toPath(upper, s, true)} fill={LAND} />)}
    <g fill="none" stroke="#eceeee" strokeWidth="2">
      {upperRoads.map((s, i) => <path key={i} d={toPath(upper, s)} />)}
      {lowerRoads.map((s, i) => <path key={i} d={toPath(lower, s)} strokeWidth="3.5" />)}
    </g>
    <g fill="none" stroke={LAND} strokeWidth="1">
      {lowerRoads.map((s, i) => <path key={i} d={toPath(lower, s)} />)}
    </g>
    <g fill="none" stroke="#e2e7ea" strokeWidth="1.6">
      {lowerRivers.map((s, i) => <path key={i} d={toPath(lower, s)} />)}
      <path d={toPath(upper, upperRiver)} strokeWidth="3" />
    </g>
    <g fill="none" stroke="#edd3d5" strokeWidth="1.5" strokeDasharray="2 3">
      {upperBorders.map((s, i) => <path key={i} d={toPath(upper, s)} />)}
      {lowerBorders.map((s, i) => <path key={i} d={toPath(lower, s)} />)}
    </g>
    {upperPlaces.map(([t, x, y], i) => {
      const [px, py] = upper([x, y]);
      return <MapLabel key={i} x={px} y={py}>{t}</MapLabel>;
    })}
    {lowerPlaces.map(([t, x, y], i) => {
      const [px, py] = lower([x, y]);
      return <MapLabel key={i} x={px} y={py}>{t}</MapLabel>;
    })}
    <MapLabel $big x={upper([462, 38])[0]} y={upper([462, 38])[1]}>CHELMSFORD</MapLabel>
    <MapLabel x={upper([200, 170])[0]} y={upper([200, 170])[1]} textAnchor="end">Chipping Ongar</MapLabel>
    <MapLabel x={lower([88, 742])[0]} y={lower([88, 742])[1]} textAnchor="end">Sevenoaks</MapLabel>
    {boroughs.map((s, i) => <path key={i} d={toPath(upper, s, true)} fill="#e3b234" stroke="#111" strokeWidth="1.5" />)}
    <g fill="none" stroke="#000" strokeWidth="1.6">
      {fragments.map((s, i) => <path key={i} d={toPath(upper, s)} />)}
      <path d={toPath(lower, [[136, 288], [137, 298]])} />
      <path d={toPath(lower, [[155, 340], [167, 354]])} />
    </g>
    <g fill="#b7a98a" stroke="#2f2f2f" strokeWidth="1.5">
      {schools.map((p, i) => {
        const [cx, cy] = upper(p);
        return <circle key={i} cx={cx} cy={cy} r="5.5" />;
      })}
      <circle cx={lower([54, 195])[0]} cy={lower([54, 195])[1]} r="5.5" />
    </g>
  </MapSvg>
);

const CategorizedIcon = () => (
  <svg width="26" height="28" viewBox="0 0 26 28">
    <rect x="1" y="1" width="20" height="6" fill="#12a5cc" stroke="#1a3fc0" strokeWidth="2" />
    <rect x="5" y="11" width="20" height="6" fill="#12b866" stroke="#0a6a3a" strokeWidth="2" />
    <rect x="1" y="21" width="20" height="6" fill="#c81010" stroke="#6a0a0a" strokeWidth="2" />
  </svg>
);
const PlusIcon = () => (
  <svg width="30" height="28" viewBox="0 0 30 30">
    <path d="M10 1H20V10H29V20H20V29H10V20H1V10H10Z" fill="#fff" stroke="#4f8a52" strokeWidth="2" />
    <path d="M13 5H17V13H25V17H17V25H13V17H5V13H13Z" fill="#4f8a52" />
  </svg>
);
const MinusIcon = () => (
  <svg width="28" height="13" viewBox="0 0 28 13">
    <rect width="28" height="13" fill="#ef5350" />
    <rect x="1.5" y="1.5" width="25" height="10" fill="none" stroke="#fff" strokeWidth="1.6" />
  </svg>
);
const GlobeOutline = () => (
  <svg width="32" height="30" viewBox="0 0 32 30" fill="none" stroke="#555" strokeWidth="1.6">
    <circle cx="16" cy="15" r="14" />
    <ellipse cx="16" cy="15" rx="7" ry="14" />
    <path d="M3 9H29M2 15H30M3 21H29M16 1V29" />
  </svg>
);
const MessageIcon = () => (
  <svg width="36" height="36" viewBox="0 0 36 36">
    <path d="M18 1C8 1 1 8 1 17S8 32 17 32C21 32 24 31 26 30L34 35L31 26C34 24 35 20 35 17C35 8 28 1 18 1Z" fill="#5c5c5c" />
    <circle cx="11" cy="16" r="2.5" fill="#fff" />
    <circle cx="18" cy="16" r="2.5" fill="#fff" />
    <circle cx="25" cy="16" r="2.5" fill="#fff" />
  </svg>
);

const Spin = () => (
  <SpinArrows>
    <Caret $dir="up" $s={7} />
    <Caret $s={7} />
  </SpinArrows>
);

const App = () => (
  <Screen>
    <GlobalStyle />
    <MenuBar>
      <FaApple size={32} />
      <AppName>QGIS-LTR</AppName>
      <MenuItems>
        {menus.map((m) => <span key={m}>{m}</span>)}
      </MenuItems>
      <StatusIcons>
        <BatteryIcon />
        <WifiIcon />
        <SearchIcon />
        <ControlIcon />
        <Clock>Wed 27 Oct at  13:17</Clock>
      </StatusIcons>
    </MenuBar>

    <MainWindow>
      <TitleBar $pad={16}>
        <TrafficLight />
        <TrafficLight />
        <TrafficLight />
      </TitleBar>
      <Toolbar $h={75}>
        <Grip />
        <ToolSlot $gap={23}><NewDoc /></ToolSlot>
        <ToolSlot $gap={28}><FolderYellow /></ToolSlot>
        <ToolGroupRight $end={357}>
          <ToolSlot><Sigma>Σ</Sigma></ToolSlot>
          <ToolSlot $gap={30}><MeasureIcon /></ToolSlot>
          <ToolSlot $gap={15}><Caret /></ToolSlot>
          <ToolSlot $gap={17}><TipIcon /></ToolSlot>
          <ToolSlot $gap={20}><ActionCursor /></ToolSlot>
          <ToolSlot $gap={12}><Caret /></ToolSlot>
          <ToolSlot $gap={17}><TextBubble /></ToolSlot>
          <ToolSlot $gap={16}><Caret /></ToolSlot>
        </ToolGroupRight>
      </Toolbar>
      <Toolbar $h={78}>
        <Grip />
        <ToolSlot $gap={15}><AddLayers /></ToolSlot>
        <ToolSlot $gap={18}><DbGlobe /></ToolSlot>
        <ToolGroupRight $end={290}>
          <ToolSlot><LabelTool glyph="arrow" /></ToolSlot>
          <ToolSlot $gap={10}><LabelTool glyph="rotate" /></ToolSlot>
          <ToolSlot $gap={18}><LabelTool glyph="pen" /></ToolSlot>
          <ToolSlot $gap={26}><Grip /></ToolSlot>
          <ToolSlot $gap={24}><GlobeBinoculars /></ToolSlot>
          <ToolSlot $gap={26}><Grip /></ToolSlot>
          <ToolSlot $gap={20}><PythonIcon /></ToolSlot>
          <ToolSlot $gap={24}><Grip /></ToolSlot>
          <ToolSlot $gap={20}><HelpBook /></ToolSlot>
          <ToolSlot $gap={30}><Grip /></ToolSlot>
        </ToolGroupRight>
      </Toolbar>
      <Toolbar $h={77}>
        <Grip />
        <ToolSlot $gap={18}><SelectTool /></ToolSlot>
        <ToolSlot $gap={13}><Caret /></ToolSlot>
        <ToolSlot $gap={22}><AttributeTool /></ToolSlot>
      </Toolbar>
      <Workspace>
        <LeftPanel>
          <PanelTitle $h={48}>Browser</PanelTitle>
          <PanelIcons $h={55}>
            <SmallNew />
            <RefreshIcon />
            <FilterIcon />
          </PanelIcons>
          <Tree $h={393}>
            <TreeRow $indent={4}>
              <TreeArrow><Caret /></TreeArrow>
              <ToolSlot $gap={10}><StarIcon /></ToolSlot>
              <TreeLabel>Favorites</TreeLabel>
            </TreeRow>
            <TreeRow $indent={44}>
              <TreeArrow><Caret $dir="right" /></TreeArrow>
              <ToolSlot $gap={8}><FolderOutline /></ToolSlot>
              <TreeLabel>Home</TreeLabel>
            </TreeRow>
            <TreeRow $indent={44}>
              <TreeArrow><Caret /></TreeArrow>
              <ToolSlot $gap={8}><FolderOutline open /></ToolSlot>
              <TreeLabel>Data</TreeLabel>
            </TreeRow>
            <TreeRow $indent={84}>
              <TreeArrow><Caret $dir="right" /></TreeArrow>
              <ToolSlot $gap={8}><GreenRing /></ToolSlot>
            </TreeRow>
            <TreeRow $indent={84} $selected>
              <TreeArrow><Caret /></TreeArrow>
              <ToolSlot $gap={8}><DbSmall /></ToolSlot>
            </TreeRow>
            <TreeRow $indent={135}><TreeStub /></TreeRow>
            <TreeRow $indent={135}><TreeStub /></TreeRow>
            <TreeRow $indent={135}><TreeStub /></TreeRow>
            <TreeRow $indent={44}>
              <TreeArrow><Caret $dir="right" /></TreeArrow>
              <ToolSlot $gap={8}><FolderOutline /></ToolSlot>
              <TreeLabel>Images</TreeLabel>
            </TreeRow>
            <TreeRow $indent={4}>
              <TreeArrow><Caret $dir="right" /></TreeArrow>
              <ToolSlot $gap={10}><SpatialIcon /></ToolSlot>
              <TreeLabel>Spatial</TreeLabel>
            </TreeRow>
            <TreeRow $indent={4}>
              <TreeArrow><Caret $dir="right" /></TreeArrow>
              <ToolSlot $gap={10}><ProjectIcon /></ToolSlot>
              <TreeLabel>Project</TreeLabel>
            </TreeRow>
          </Tree>
          <PanelTitle $h={60} $top={10}>Layers</PanelTitle>
          <PanelIcons $h={55}>
            <PaintBrush w={30} h={28} />
            <ClipIcon />
            <EyeIcon />
          </PanelIcons>
          <Tree $h={445}>
            <TreeRow $indent={4}>
              <TreeArrow><Caret /></TreeArrow>
              <ToolSlot $gap={10}><CheckBox><Check /></CheckBox></ToolSlot>
              <LayerSymbol><VectorIcon /></LayerSymbol>
              <TreeLabel $bold>Camden</TreeLabel>
            </TreeRow>
            <TreeRow $h={72} $indent={86}><CheckBox><Check /></CheckBox><LegendDash $c="#8f8bd6" /></TreeRow>
            <TreeRow $h={72} $indent={86}><CheckBox><Check /></CheckBox><LegendDash $c="#9a9a9a" /></TreeRow>
            <TreeRow $h={72} $indent={86}><CheckBox><Check /></CheckBox><LegendDash $c="#9a9a9a" /></TreeRow>
            <TreeRow $indent={46} $selected>
              <CheckBox><Check /></CheckBox>
              <LayerSymbol><SchoolDot /></LayerSymbol>
              <TreeLabel $bold $under>Schools</TreeLabel>
            </TreeRow>
            <TreeRow $indent={46}>
              <CheckBox><Check /></CheckBox>
              <LayerSymbol><SwatchSquare /></LayerSymbol>
              <TreeLabel $bold>Study</TreeLabel>
            </TreeRow>
            <TreeRow $indent={4}>
              <TreeArrow><Caret /></TreeArrow>
              <ToolSlot $gap={10}><CheckBox><Check /></CheckBox></ToolSlot>
              <LayerSymbol><CheckerIcon /></LayerSymbol>
              <TreeLabel $bold>Carto</TreeLabel>
            </TreeRow>
          </Tree>
        </LeftPanel>
        <MapPane><MapView /></MapPane>
      </Workspace>
      <StatusBar>
        <LocatorBox>
          <SearchIcon c="#8a8a8a" s={24} />
          Type to locate
        </LocatorBox>
        <StatusRight>
          <SpinBox $w={50}><Spin /></SpinBox>
          <StatusCell $w={107} $gap={19}>Rotation</StatusCell>
          <SpinBox $w={184}>
            <SpinValue>0,0 °</SpinValue>
            <Spin />
          </SpinBox>
          <StatusCell $gap={13}>
            <CheckBox $s={28}><Check /></CheckBox>
          </StatusCell>
          <StatusCell $w={106} $gap={10}>Render</StatusCell>
          <StatusCell><GlobeOutline /></StatusCell>
          <StatusCell $w={176} $gap={5}>EPSG:27700</StatusCell>
          <StatusCell><MessageIcon /></StatusCell>
        </StatusRight>
      </StatusBar>
    </MainWindow>

    <Dialog>
      <TitleBar $pad={15}>
        <TrafficLight $red />
        <TrafficLight />
        <TrafficLight />
        <WindowTitle>Layer Properties — Session4-London Schools — Symbology</WindowTitle>
      </TitleBar>
      <DialogBody>
        <NavColumn>
          <NavSearch><SearchIcon c="#8a8a8a" s={24} /></NavSearch>
          <NavBody>
            <NavList>
              {navItems.map((item) => (
                <NavRow key={item.name} $selected={item.selected} $h={item.h}>
                  <NavIconSlot>{navIcons[item.name]}</NavIconSlot>
                  <NavText>{item.name === "Auxiliary Storage" ? <>Auxiliary<br />Storage</> : item.name}</NavText>
                </NavRow>
              ))}
            </NavList>
            <NavScroll>
              <ScrollEnd $h={26} $top><Caret $dir="up" /></ScrollEnd>
              <ScrollThumb $h={997} $c="#fff" />
              <ScrollThumb $h={236} $c="#e4e4e4" />
              <ScrollEnd $h={25}><Caret /></ScrollEnd>
            </NavScroll>
          </NavBody>
        </NavColumn>
        <SplitHandle><HandleDots /></SplitHandle>
        <RightPane>
          <ComboBox $h={47}>
            <CategorizedIcon />
            Categorized
            <ComboArrow><Caret /></ComboArrow>
          </ComboBox>
          <FormRow $h={46} $gap={13}>
            <FormLabel>Value</FormLabel>
            <ValueInput>
              <ValueField />
              <ValueArrow><Caret /></ValueArrow>
            </ValueInput>
            <ExprButton>ε</ExprButton>
            <DropList>
              <DropRows>
                {fields.map(([kind, name]) => (
                  <DropRow key={name} $selected={name === "GENDER"}>
                    <TypeCell $selected={name === "GENDER"}>{kind}</TypeCell>
                    <FieldName>{name}</FieldName>
                  </DropRow>
                ))}
              </DropRows>
              <DropScroll>
                <ScrollEnd $h={26} $top><Caret $dir="up" /></ScrollEnd>
                <ScrollThumb $h={67} $c="#e4e4e4" />
                <ScrollThumb $h={170} $c="#fff" />
                <ScrollThumb $h={187} $c="#e4e4e4" />
                <ScrollEnd $h={30}><Caret /></ScrollEnd>
              </DropScroll>
            </DropList>
          </FormRow>
          <FormRow $h={43} $gap={14}>
            <FormLabel>Symbol</FormLabel>
            <ComboBox $h={43} $fill />
            <SmallDrop><Caret /></SmallDrop>
          </FormRow>
          <FormRow $h={55} $gap={13}>
            <FormLabel>Color ramp</FormLabel>
            <ComboBox $h={55} $fill />
            <SmallDrop><Caret /></SmallDrop>
          </FormRow>
          <SymbolTable>
            <TableHeader>
              <HeaderCell $w={132}>Symbol<Caret $s={6} /></HeaderCell>
              <HeaderCell $w={400}>Value</HeaderCell>
            </TableHeader>
          </SymbolTable>
          <ButtonRow>
            <PushButton $w={159}>Classify</PushButton>
            <PushButton $w={54}><PlusIcon /></PushButton>
            <PushButton $w={54}><MinusIcon /></PushButton>
            <PushButton $w={158}>Delete All</PushButton>
            <ButtonSpacer />
            <PushButton $w={157} $menu>
              Advanced
              <ButtonCaret><Caret $s={4} /></ButtonCaret>
            </PushButton>
          </ButtonRow>
          <CollapsedSection>
            <Caret $dir="right" $s={10} $c="#333" />
            Layer Rendering
          </CollapsedSection>
          <ButtonRow $gap={0}>
            <PushButton $w={159}>Help</PushButton>
            <PushButton $w={158} $menu>
              Style
              <ButtonCaret><Caret $s={5} /></ButtonCaret>
            </PushButton>
            <PushButton $w={158}>Apply</PushButton>
            <ButtonSpacer />
            <PushButton $w={159}>Cancel</PushButton>
            <PushButton $w={157} $primary>OK</PushButton>
          </ButtonRow>
        </RightPane>
      </DialogBody>
    </Dialog>
  </Screen>
);

export default App;
